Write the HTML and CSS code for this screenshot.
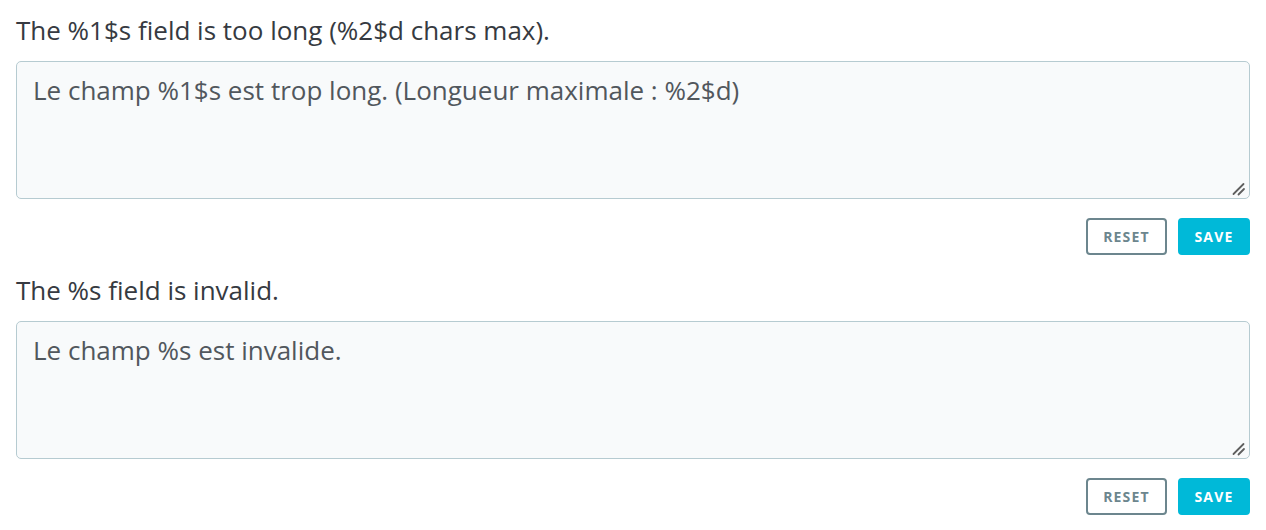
FILE: index.html
```html
<!DOCTYPE html>
<html lang="en">
<head>
<meta charset="utf-8">
<link rel="stylesheet" href="styles.css">
</head>
<body>
<div class="page">
  <div class="entry">
    <label class="label">The %1$s field is too long (%2$d chars max).</label>
    <div class="field-wrap">
      <textarea class="field">Le champ %1$s est trop long. (Longueur maximale : %2$d)</textarea>
      <svg class="grip" width="14" height="14" viewBox="0 0 14 14"><path d="M1.5 12 L11.5 2 M6.5 12.5 L12 7" stroke="#5f5f5f" stroke-width="1.8" stroke-linecap="round" fill="none"/></svg>
    </div>
    <div class="actions">
      <button class="btn btn-reset">Reset</button>
      <button class="btn btn-save">Save</button>
    </div>
  </div>
  <div class="entry">
    <label class="label">The %s field is invalid.</label>
    <div class="field-wrap">
      <textarea class="field">Le champ %s est invalide.</textarea>
      <svg class="grip" width="14" height="14" viewBox="0 0 14 14"><path d="M1.5 12 L11.5 2 M6.5 12.5 L12 7" stroke="#5f5f5f" stroke-width="1.8" stroke-linecap="round" fill="none"/></svg>
    </div>
    <div class="actions">
      <button class="btn btn-reset">Reset</button>
      <button class="btn btn-save">Save</button>
    </div>
  </div>
</div>
</body>
</html>
```

FILE: styles.css
```css
html, body {
  margin: 0;
  padding: 0;
  background: #fff;
}
body {
  font-family: "Open Sans", "Noto Sans", sans-serif;
  color: #363a41;
}
.page {
  padding: 12px 16px 0 16px;
  display: flex;
  flex-direction: column;
}
.entry {
  display: flex;
  flex-direction: column;
  height: 260px;
}
.label {
  font-size: 26px;
  line-height: 36px;
  color: #363a41;
  margin-bottom: 13px;
}
.field-wrap {
  position: relative;
  height: 138px;
}
.field {
  display: block;
  box-sizing: border-box;
  width: 100%;
  height: 138px;
  margin: 0;
  padding: 10px 16px;
  border: 1px solid #b6cbd1;
  border-radius: 5px;
  background: #f8fafb;
  font-family: "Open Sans", "Noto Sans", sans-serif;
  font-size: 26px;
  line-height: 36px;
  color: #51575d;
  resize: none;
  outline: none;
}
.grip {
  position: absolute;
  right: 4px;
  bottom: 3px;
}
.actions {
  display: flex;
  justify-content: flex-end;
  gap: 11px;
  margin-top: 19px;
}
.btn {
  box-sizing: border-box;
  height: 37px;
  border-radius: 4px;
  font-family: "Open Sans", "Noto Sans", sans-serif;
  font-weight: 700;
  font-size: 14px;
  letter-spacing: 1.2px;
  text-transform: uppercase;
  padding: 0;
  cursor: pointer;
}
.btn-reset {
  width: 81px;
  background: #fff;
  border: 2px solid #6c868e;
  color: #6c868e;
}
.btn-save {
  width: 72px;
  background: #00b9d8;
  border: 2px solid #00b9d8;
  color: #fff;
}
```
